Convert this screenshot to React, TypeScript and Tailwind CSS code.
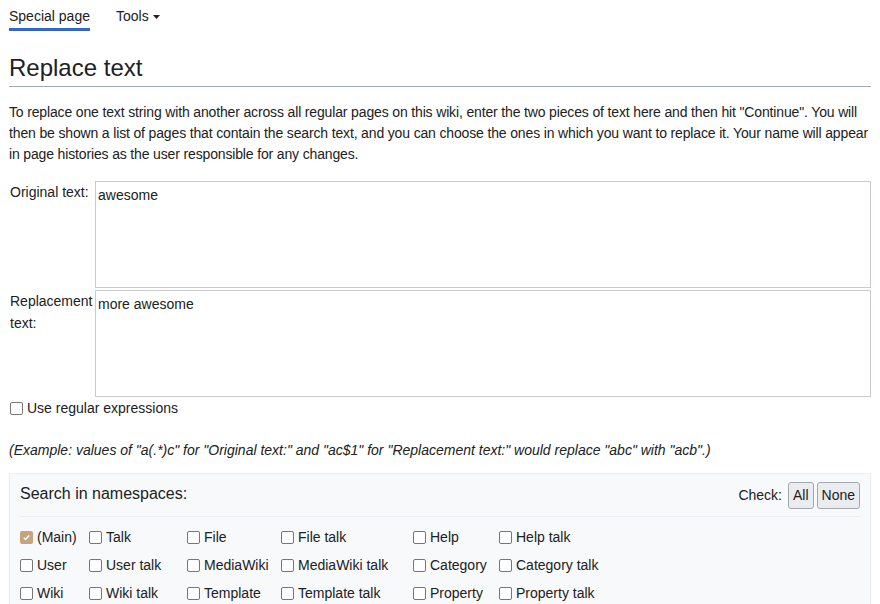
import React from "react";

const cols = [
  ["(Main)", "User", "Wiki"],
  ["Talk", "User talk", "Wiki talk"],
  ["File", "MediaWiki", "Template"],
  ["File talk", "MediaWiki talk", "Template talk"],
  ["Help", "Category", "Property"],
  ["Help talk", "Category talk", "Property talk"],
];
const widths = ["w-[69px]", "w-[98px]", "w-[94px]", "w-[132px]", "w-[86px]", "w-[120px]"];

function Box({ checked }: { checked?: boolean }) {
  return checked ? (
    <span className="inline-flex w-[13px] h-[13px] rounded-[2px] bg-[#c8a27c] items-center justify-center mr-[4px]">
      <svg width="9" height="9" viewBox="0 0 10 10"><path d="M2 5.2l2 2 4-4.5" stroke="white" strokeWidth="1.6" fill="none" /></svg>
    </span>
  ) : (
    <span className="inline-block w-[13px] h-[13px] rounded-[2px] border border-[#767676] bg-white mr-[4px]" />
  );
}

export default function App() {
  return (
    <div className="bg-white text-[#202122] text-[14px] px-[9px] pt-[6px] min-h-[604px]" style={{ fontFamily: "'Liberation Sans', Arial, sans-serif" }}>
      <div className="flex gap-[26px] items-start h-[24px]">
        <span className="border-b-[3px] border-[#36c] pb-[1px]">Special page</span>
        <span className="flex items-center gap-[4px]">Tools <svg width="7" height="4" viewBox="0 0 7 4"><path d="M0 0h7L3.5 4z" fill="#202122" /></svg></span>
      </div>
      <h1 className="text-[24px] mt-[22px] leading-[32px] pb-[2px] border-b border-[#a2a9b1]">Replace text</h1>
      <p className="mt-[15px] leading-[21px] tracking-[-0.15px]">To replace one text string with another across all regular pages on this wiki, enter the two pieces of text here and then hit "Continue". You will then be shown a list of pages that contain the search text, and you can choose the ones in which you want to replace it. Your name will appear in page histories as the user responsible for any changes.</p>
      <div className="mt-[16px] flex">
        <div className="w-[86px] pl-[1px] pt-[1px]">Original text:</div>
        <div className="flex-1 h-[107px] border border-[#c8ccd1] px-[2px] py-[3px]">awesome</div>
      </div>
      <div className="mt-[2px] flex">
        <div className="w-[86px] pl-[1px] leading-[22px]">Replacement text:</div>
        <div className="flex-1 h-[107px] border border-[#c8ccd1] px-[2px] py-[3px]">more awesome</div>
      </div>
      <div className="flex items-center mt-[1px] pl-[1px]"><Box />Use regular expressions</div>
      <p className="italic mt-[21px]">(Example: values of "a(.*)c" for "Original text:" and "ac$1" for "Replacement text:" would replace "abc" with "acb".)</p>
      <div className="mt-[12px] border border-[#eaecf0] bg-[#f8f9fa] px-[10px] pt-[8px] h-[140px]">
        <div className="flex justify-between items-start">
          <span className="text-[16px]">Search in namespaces:</span>
          <span className="flex items-center gap-[3px]">Check:<span className="ml-[3px] px-[4px] py-[2px] border border-[#a2a9b1] rounded-[3px] bg-[#eaecf0]">All</span><span className="px-[4px] py-[2px] border border-[#a2a9b1] rounded-[3px] bg-[#eaecf0]">None</span></span>
        </div>
        <div className="mt-[7px] border-t border-[#eaecf0] pt-[6px] flex">
          {cols.map((c, i) => (
            <div key={i} className={widths[i]}>
              {c.map((t, j) => (
                <div key={t} className="flex items-center h-[28px]"><Box checked={i === 0 && j === 0} />{t}</div>
              ))}
            </div>
          ))}
        </div>
      </div>
    </div>
  );
}
